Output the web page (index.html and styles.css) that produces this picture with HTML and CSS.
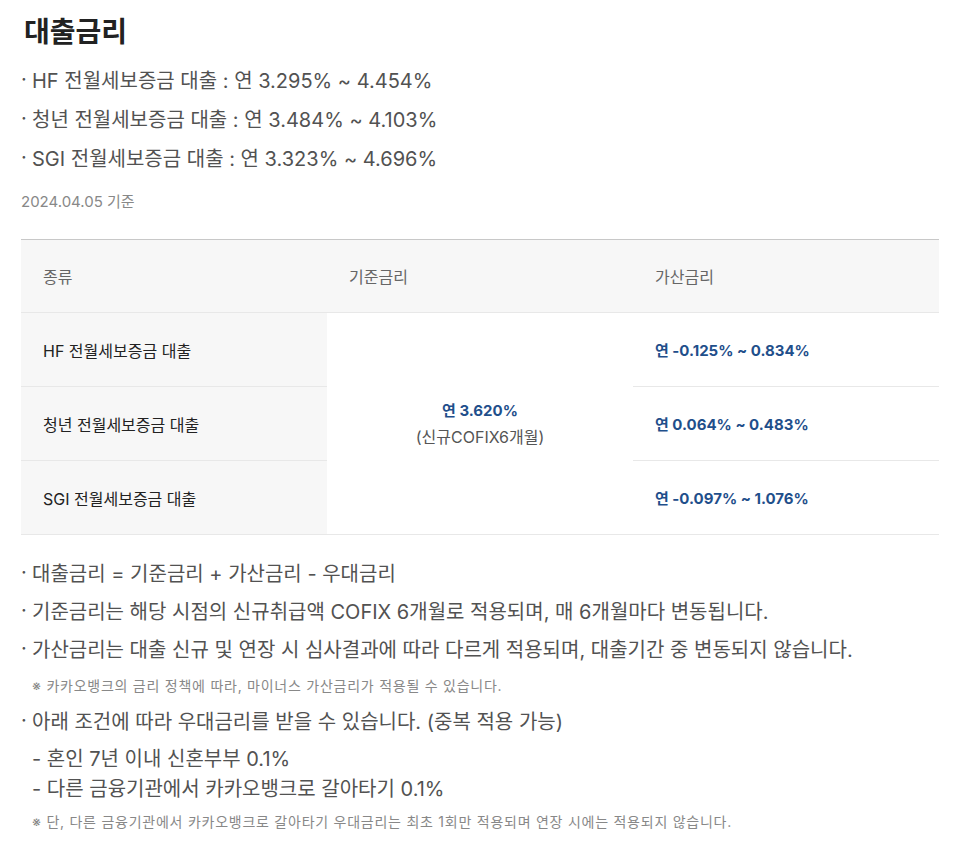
FILE: index.html
```html
<!DOCTYPE html>
<html lang="ko">
<head>
<meta charset="utf-8">
<title>대출금리</title>
<link rel="stylesheet" href="styles.css">
</head>
<body>
<div class="page">
  <h2 class="title">대출금리</h2>
  <ul class="rates">
    <li>HF 전월세보증금 대출 : 연 3.295% ~ 4.454%</li>
    <li>청년 전월세보증금 대출 : 연 3.484% ~ 4.103%</li>
    <li>SGI 전월세보증금 대출 : 연 3.323% ~ 4.696%</li>
  </ul>
  <p class="date">2024.04.05 기준</p>
  <table class="rate-table">
    <thead>
      <tr><th>종류</th><th>기준금리</th><th>가산금리</th></tr>
    </thead>
    <tbody>
      <tr>
        <td class="kind">HF 전월세보증금 대출</td>
        <td class="base" rowspan="3"><strong>연 3.620%</strong><span>(신규COFIX6개월)</span></td>
        <td class="add">연 -0.125% ~ 0.834%</td>
      </tr>
      <tr>
        <td class="kind">청년 전월세보증금 대출</td>
        <td class="add">연 0.064% ~ 0.483%</td>
      </tr>
      <tr>
        <td class="kind">SGI 전월세보증금 대출</td>
        <td class="add">연 -0.097% ~ 1.076%</td>
      </tr>
    </tbody>
  </table>
  <ul class="notes">
    <li>대출금리 = 기준금리 + 가산금리 - 우대금리</li>
    <li>기준금리는 해당 시점의 신규취급액 COFIX 6개월로 적용되며, 매 6개월마다 변동됩니다.</li>
    <li>가산금리는 대출 신규 및 연장 시 심사결과에 따라 다르게 적용되며, 대출기간 중 변동되지 않습니다.
      <p class="small small-first">※ 카카오뱅크의 금리 정책에 따라, 마이너스 가산금리가 적용될 수 있습니다.</p>
    </li>
    <li>아래 조건에 따라 우대금리를 받을 수 있습니다. (중복 적용 가능)
      <div class="sub">
        <p>- 혼인 7년 이내 신혼부부 0.1%</p>
        <p>- 다른 금융기관에서 카카오뱅크로 갈아타기 0.1%</p>
      </div>
      <p class="small small-last">※ 단, 다른 금융기관에서 카카오뱅크로 갈아타기 우대금리는 최초 1회만 적용되며 연장 시에는 적용되지 않습니다.</p>
    </li>
  </ul>
</div>
</body>
</html>
```
FILE: styles.css
```css
* { box-sizing: border-box; }
html, body { margin: 0; padding: 0; background: #fff; }
body {
  font-family: Inter, "Noto Sans CJK KR", sans-serif;
  color: #222;
}
.page {
  width: 918px;
  margin-left: 21px;
  padding-top: 14px;
}
.title {
  margin: 0 0 0 3px;
  font-size: 28px;
  line-height: 36px;
  font-weight: 700;
  color: #222;
}
.rates, .notes {
  list-style: none;
  margin: 0;
  padding: 0;
}
.rates { margin-top: 12px; }
.rates li, .notes > li {
  position: relative;
  padding-left: 11px;
  font-size: 20px;
  line-height: 39px;
  color: #525252;
}
.notes > li { line-height: 38px; }
.rates li::before, .notes > li::before {
  content: "·";
  position: absolute;
  left: 0;
  top: -2px;
  color: #525252;
}
.date {
  margin: 13px 0 0;
  font-size: 15px;
  line-height: 20px;
  color: #888;
}
.rate-table {
  margin-top: 27px;
  width: 918px;
  border-collapse: collapse;
  table-layout: fixed;
  border-top: 1px solid #c8c8c8;
  border-bottom: 1px solid #e8e8e8;
}
.rate-table th {
  height: 73px;
  background: #f7f7f7;
  text-align: left;
  padding: 0 0 0 22px;
  font-size: 16px;
  font-weight: 400;
  color: #666;
  border-bottom: 1px solid #e8e8e8;
}
.rate-table td {
  height: 74px;
  padding: 0 0 0 22px;
  font-size: 16px;
  color: #222;
  border-bottom: 1px solid #e8e8e8;
}
.rate-table td.kind { background: #f7f7f7; }
.rate-table td.base {
  text-align: center;
  padding: 0;
  background: #fff;
}
.rate-table td.base strong {
  display: block;
  color: #1f4f8b;
  font-weight: 700;
  font-size: 15px;
  line-height: 26px;
}
.rate-table td.base span {
  display: block;
  color: #555;
  line-height: 26px;
}
.rate-table td.add {
  color: #1f4f8b;
  font-weight: 700;
  font-size: 15px;
}
.notes { margin-top: 20px; }
.small {
  margin: 7px 0 0 0;
  font-size: 14px;
  line-height: 20px;
  color: #888;
  letter-spacing: 0.75px;
}
.small-first { margin-bottom: 7px; }
.sub { margin-top: 3px; }
.sub p {
  margin: 0;
  line-height: 30px;
}
.small-last { margin-top: 8px; }
```
